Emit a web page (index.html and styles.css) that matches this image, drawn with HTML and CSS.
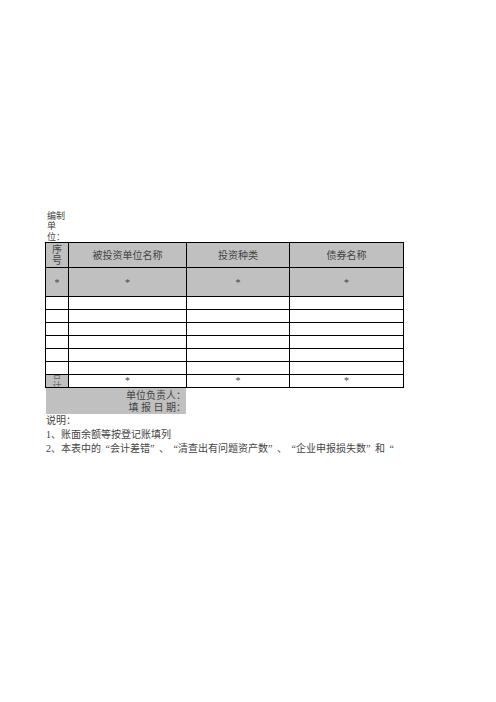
FILE: index.html
```html
<!DOCTYPE html>
<html lang="zh-CN">
<head>
<meta charset="utf-8">
<link rel="stylesheet" href="styles.css">
</head>
<body>
<div class="page">
  <div class="unit">编制单位：</div>
  <table class="grid">
    <colgroup>
      <col class="c1"><col class="c2"><col class="c3"><col class="c4">
    </colgroup>
    <tr class="head">
      <td class="narrow">序号</td>
      <td>被投资单位名称</td>
      <td>投资种类</td>
      <td>债券名称</td>
    </tr>
    <tr class="star">
      <td>*</td><td>*</td><td>*</td><td>*</td>
    </tr>
    <tr class="row"><td></td><td></td><td></td><td></td></tr>
    <tr class="row"><td></td><td></td><td></td><td></td></tr>
    <tr class="row"><td></td><td></td><td></td><td></td></tr>
    <tr class="row"><td></td><td></td><td></td><td></td></tr>
    <tr class="row"><td></td><td></td><td></td><td></td></tr>
    <tr class="row"><td></td><td></td><td></td><td></td></tr>
    <tr class="row total">
      <td class="gray"><div class="clip"><div class="clip-in">合计</div></div></td>
      <td><div class="clip"><span class="ast">*</span></div></td>
      <td><div class="clip"><span class="ast">*</span></div></td>
      <td><div class="clip"><span class="ast">*</span></div></td>
    </tr>
  </table>
  <div class="sign">
    <div>单位负责人：</div>
    <div>填 报 日 期：</div>
  </div>
  <div class="notes">
    <div>说明：</div>
    <div>1、账面余额等按登记账填列</div>
    <div class="n2">2、本表中的<span class="qo">“</span>会计差错<span class="qc">”</span>、<span class="qo">“</span>清查出有问题资产数<span class="qc">”</span>、<span class="qo">“</span>企业申报损失数<span class="qc">”</span>和<span class="qo">“</span></div>
  </div>
</div>
</body>
</html>
```

FILE: styles.css
```css
html, body {
  margin: 0;
  padding: 0;
  background: #fff;
}
body {
  font-family: "Liberation Serif", "Noto Sans CJK SC", serif;
  color: #222;
  width: 496px;
  height: 702px;
}
.page {
  padding: 211px 0 0 45px;
}
.unit {
  width: 20px;
  font-size: 9px;
  line-height: 10.4px;
  padding-left: 2px;
  color: #444;
}
.grid {
  border-collapse: collapse;
  table-layout: fixed;
  width: 358px;
  font-size: 10px;
}
.c1 { width: 23px; }
.c2 { width: 118px; }
.c3 { width: 103px; }
.c4 { width: 114px; }
.grid td {
  border: 1px solid #000;
  padding: 0;
  text-align: center;
  vertical-align: middle;
  overflow: hidden;
}
.head td, .star td {
  background: #c0c0c0;
}
.head td {
  height: 24px;
  line-height: 11px;
  font-size: 10px;
  color: #444;
}
.narrow {
  word-break: break-all;
  padding: 0 5px !important;
}
.star td {
  height: 28px;
  color: #444;
}
.row td {
  height: 12px;
}
.gray {
  background: #c0c0c0;
}
.clip {
  height: 12px;
  overflow: hidden;
  display: flex;
  align-items: center;
  justify-content: center;
}
.clip-in {
  width: 11px;
  line-height: 11px;
  font-size: 9px;
  color: #666;
  word-break: break-all;
  flex: none;
}
.ast {
  line-height: 12px;
  color: #444;
}
.sign {
  width: 140px;
  margin-left: 1px;
  height: 26px;
  background: #c0c0c0;
  text-align: right;
  font-size: 10px;
  line-height: 12px;
  padding-top: 2px;
  box-sizing: border-box;
  color: #444;
}
.notes {
  font-size: 10px;
  line-height: 13.5px;
  padding-left: 1px;
  color: #444;
}
.n2 {
  margin-top: 1px;
}
.qo, .qc {
  display: inline-block;
  width: 9px;
}
.qo {
  text-align: right;
}
.qc {
  text-align: left;
}
```
